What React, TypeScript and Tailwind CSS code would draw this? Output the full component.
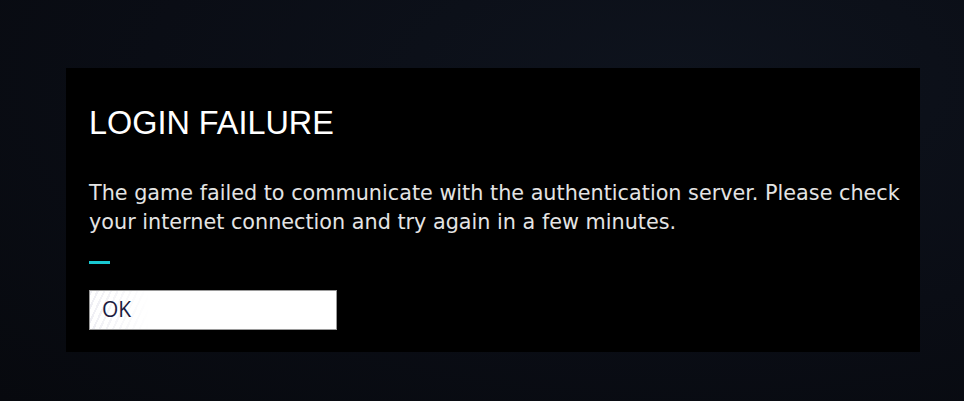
export default function App() {
  return (
    <div className="h-screen w-screen overflow-hidden bg-[radial-gradient(ellipse_at_70%_20%,#0e131d_0%,#0a0d15_55%,#07090e_100%)] pt-[68px] pl-[66px]">
      <div className="flex h-[284px] w-[854px] flex-col bg-black px-[23px] pt-[35px]">
        <h1 className="font-['Liberation_Sans',sans-serif] text-[32.4px] leading-[40px] text-white">
          LOGIN FAILURE
        </h1>
        <p className="mt-[36px] whitespace-nowrap font-['DejaVu_Sans',sans-serif] text-[20.75px] leading-[29px] text-[#e4e4e4]">
          The game failed to communicate with the authentication server. Please check
          <br />
          your internet connection and try again in a few minutes.
        </p>
        <div className="mt-[24px] h-[3px] w-[21px] shrink-0 bg-[#19c9d2]" />
        <button className="relative mt-[26px] flex h-[40px] w-[248px] shrink-0 items-center overflow-hidden border border-[#9a9a9a] bg-white pl-[12px] text-left">
          <span className="absolute inset-y-0 left-0 w-[60px] bg-[repeating-linear-gradient(115deg,#efeff4_0px,#efeff4_2px,#ffffff_2px,#ffffff_6px)] [mask-image:linear-gradient(to_right,black,transparent)]" />
          <span className="relative font-['Open_Sans',sans-serif] text-[21px] font-medium text-[#1b1b40]">OK</span>
        </button>
      </div>
    </div>
  );
}
